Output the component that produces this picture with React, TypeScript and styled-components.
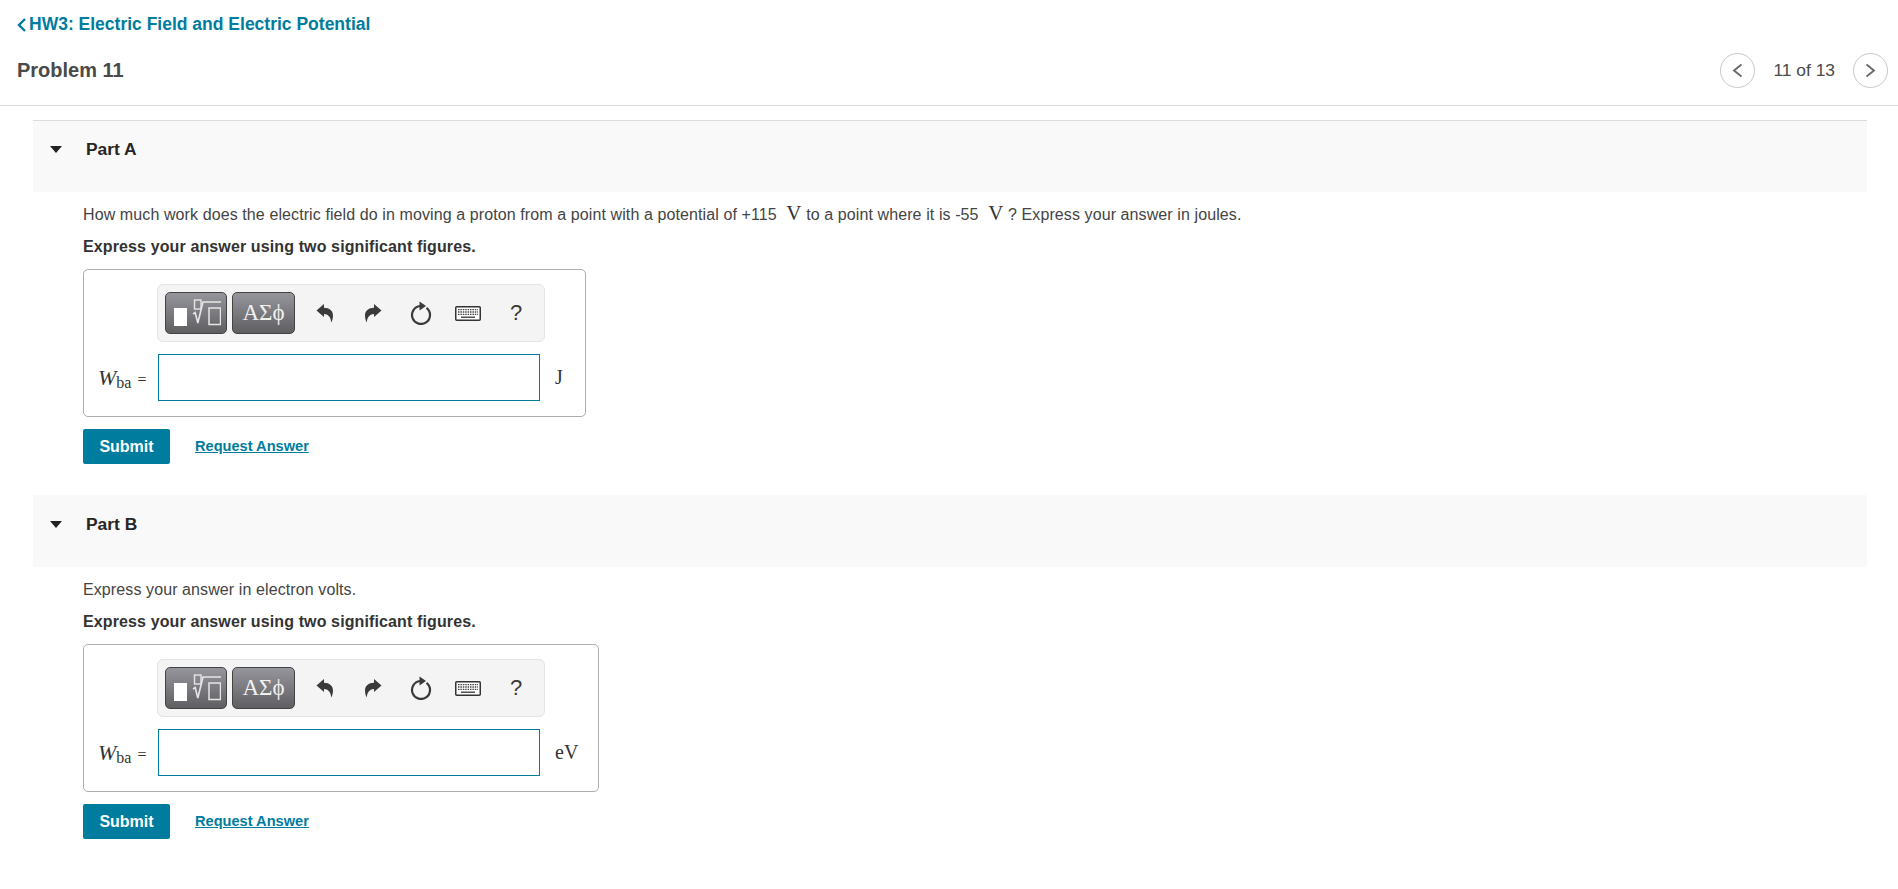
import styled, { createGlobalStyle } from "styled-components"

const GlobalStyle = createGlobalStyle`
html, body {
  margin: 0;
  padding: 0;
  background: #fff;
  font-family: "Liberation Sans", Arial, sans-serif;
  color: #333;
}
`

const teal = "#007c9e"

const UndoIcon = () => (
    <svg width="18" height="20" viewBox="0 0 18 20">
        <path d="M0.5 7.5 L8 1 L8 4.8 C13.5 4.8 17 8 17 12.5 C17 15 16.4 17.5 15.2 19.5 C15 15.5 13 11 8 11 L8 14 Z" fill="#3a3a3a" />
    </svg>
)

const RedoIcon = () => (
    <svg width="18" height="20" viewBox="0 0 18 20">
        <path d="M17.5 7.5 L10 1 L10 4.8 C4.5 4.8 1 8 1 12.5 C1 15 1.6 17.5 2.8 19.5 C3 15.5 5 11 10 11 L10 14 Z" fill="#3a3a3a" />
    </svg>
)

const ResetIcon = () => (
    <svg width="22" height="24" viewBox="0 0 22 24">
        <path d="M10 5 A9 9 0 1 0 16.5 6.8" fill="none" stroke="#3a3a3a" strokeWidth="2.2" />
        <path d="M9.5 0.5 L16 5 L9.5 9.5 Z" fill="#3a3a3a" />
    </svg>
)

const KeyboardIcon = () => (
    <svg width="26" height="15" viewBox="0 0 26 15">
        <rect x="0.75" y="0.75" width="24.5" height="13.5" rx="1" fill="#fff" stroke="#333" strokeWidth="1.5" />
        <path d="M3 3.6 H23 M3 6 H23 M3 8.4 H23" stroke="#444" strokeWidth="1.3" strokeDasharray="1.5 0.9" fill="none" />
        <path d="M6 11.2 H20" stroke="#333" strokeWidth="1.3" fill="none" />
    </svg>
)

const TemplatesIcon = () => (
    <svg width="50" height="34" viewBox="0 0 50 34">
        <rect x="3" y="12" width="13" height="18" fill="#fff" />
        <rect x="23.5" y="4" width="6.5" height="9" fill="none" stroke="#e6e6e6" strokeWidth="1.4" />
        <path d="M22 18 L24.2 16.5 L26.8 27 L32 6 H50" fill="none" stroke="#e6e6e6" strokeWidth="1.6" />
        <rect x="38" y="12" width="11.5" height="16.5" fill="none" stroke="#e6e6e6" strokeWidth="1.5" />
    </svg>
)

const Chevron = ({ flip }: { flip?: boolean }) => (
    <svg width="11" height="15" viewBox="0 0 11 15">
        <path d={flip ? "M1.5 1.5 L9 7.5 L1.5 13.5" : "M9.5 1.5 L2 7.5 L9.5 13.5"} fill="none" stroke="#666" strokeWidth="1.8" />
    </svg>
)

const BackArrow = () => (
    <svg width="10" height="14" viewBox="0 0 10 14">
        <path d="M8 1 L2 7 L8 13" fill="none" stroke={teal} strokeWidth="2.4" />
    </svg>
)

const AnswerPart = ({ title, text, unit, wide, ruled }: { title: string; text: React.ReactNode; unit: string; wide?: boolean; ruled?: boolean }) => (
    <Part>
        <PartHeader $ruled={ruled}>
            <Caret />
            <PartTitle>{title}</PartTitle>
        </PartHeader>
        <PartBody>
            <Question>{text}</Question>
            <Instruction>Express your answer using two significant figures.</Instruction>
            <AnswerBox $wide={wide}>
                <Toolbar>
                    <DarkButton $width={62}><TemplatesIcon /></DarkButton>
                    <DarkButton $width={63}>ΑΣϕ</DarkButton>
                    <ToolIcon $left={16}><UndoIcon /></ToolIcon>
                    <ToolIcon $left={25}><RedoIcon /></ToolIcon>
                    <ToolIcon $left={23}><ResetIcon /></ToolIcon>
                    <ToolIcon $left={18}><KeyboardIcon /></ToolIcon>
                    <HelpMark>?</HelpMark>
                </Toolbar>
                <InputRow>
                    <VarLabel><i>W</i><sub>ba</sub><Equals>=</Equals></VarLabel>
                    <AnswerInput />
                    <Unit>{unit}</Unit>
                </InputRow>
            </AnswerBox>
            <Actions>
                <SubmitButton>Submit</SubmitButton>
                <RequestLink>Request Answer</RequestLink>
            </Actions>
        </PartBody>
    </Part>
)

const App = () => {
    return (
        <Page>
            <GlobalStyle />
            <Header>
                <BackLink><BackArrow />HW3: Electric Field and Electric Potential</BackLink>
                <TitleRow>
                    <Title>Problem 11</Title>
                    <Pager>
                        <RoundButton><Chevron /></RoundButton>
                        <PagerText>11 of 13</PagerText>
                        <RoundButton><Chevron flip /></RoundButton>
                    </Pager>
                </TitleRow>
            </Header>
            <Main>
                <AnswerPart
                    title="Part A"
                    unit="J"
                    ruled
                    text={<>How much work does the electric field do in moving a proton from a point with a potential of +115 <MathUnit>V</MathUnit> to a point where it is -55 <MathUnit>V</MathUnit> ? Express your answer in joules.</>}
                />
                <AnswerPart title="Part B" unit="eV" wide text="Express your answer in electron volts." />
            </Main>
        </Page>
    )
}

export default App

const Page = styled.div`
width: 100%;
min-height: 889px;
`
const Header = styled.div`
height: 106px;
padding: 15px 17px 0;
box-sizing: border-box;
border-bottom: 1px solid #dcdcdc;
`
const BackLink = styled.a`
display: flex;
align-items: center;
gap: 2px;
height: 19px;
font-size: 17.5px;
font-weight: bold;
color: ${teal};
`
const TitleRow = styled.div`
display: flex;
justify-content: space-between;
align-items: center;
margin-top: 19px;
`
const Title = styled.div`
font-size: 20px;
font-weight: bold;
color: #4a4a4a;
`
const Pager = styled.div`
display: flex;
align-items: center;
gap: 18px;
margin-right: -7px;
`
const RoundButton = styled.div`
width: 35px;
height: 35px;
box-sizing: border-box;
border: 1px solid #c8c8c8;
border-radius: 50%;
display: flex;
align-items: center;
justify-content: center;
`
const PagerText = styled.div`
font-size: 17.4px;
color: #4a4a4a;
`
const Main = styled.div`
padding: 14px 31px 0 33px;
`
const Part = styled.section`
margin-bottom: 31px;
`
const PartHeader = styled.div<{ $ruled?: boolean }>`
height: 72px;
box-sizing: border-box;
border-top: 1px solid ${(p) => (p.$ruled ? "#dcdcdc" : "#f9f9f9")};
background: #f9f9f9;
display: flex;
align-items: flex-start;
padding-top: 18px;
`
const Caret = styled.div`
width: 0;
height: 0;
margin: 7px 0 0 17px;
border-left: 6.5px solid transparent;
border-right: 6.5px solid transparent;
border-top: 7px solid #222;
`
const PartTitle = styled.div`
margin-left: 24px;
font-size: 17.4px;
font-weight: bold;
color: #262626;
`
const PartBody = styled.div`
padding: 13px 0 0 50px;
`
const Question = styled.div`
font-size: 16px;
letter-spacing: 0.1px;
line-height: 20px;
color: #444;
`
const MathUnit = styled.span`
font-family: "Liberation Serif", serif;
font-size: 21px;
line-height: 0;
margin-left: 5px;
color: #333;
`
const Instruction = styled.div`
margin-top: 12px;
font-size: 16px;
letter-spacing: 0.12px;
line-height: 20px;
font-weight: bold;
color: #333;
`
const AnswerBox = styled.div<{ $wide?: boolean }>`
width: ${(p) => (p.$wide ? "516px" : "503px")};
height: 148px;
box-sizing: border-box;
margin-top: 12px;
border: 1px solid #adadad;
border-radius: 5px;
padding: 14px 0 0 73px;
`
const Toolbar = styled.div`
width: 388px;
height: 58px;
box-sizing: border-box;
display: flex;
align-items: center;
gap: 5px;
padding-left: 7px;
background: #f4f4f4;
border: 1px solid #e3e3e3;
border-radius: 6px;
`
const DarkButton = styled.div<{ $width: number }>`
width: ${(p) => p.$width}px;
height: 42px;
box-sizing: border-box;
flex: none;
display: flex;
align-items: center;
justify-content: center;
border: 1px solid #444;
border-radius: 5px;
background: linear-gradient(#95959c, #5f5f62);
color: #f0f0f0;
font-family: "Liberation Serif", serif;
font-size: 23px;
`
const ToolIcon = styled.div<{ $left: number }>`
flex: none;
display: flex;
margin-left: ${(p) => p.$left}px;
`
const HelpMark = styled.div`
margin-left: 24px;
font-family: "Liberation Sans", sans-serif;
font-size: 22px;
color: #3a3a3a;
`
const InputRow = styled.div`
display: flex;
align-items: center;
margin: 12px 0 0 -59px;
`
const VarLabel = styled.div`
width: 60px;
flex: none;
font-family: "Liberation Serif", serif;
font-size: 18px;
color: #333;
i { font-size: 22px; }
sub { font-size: 16px; vertical-align: -3px; line-height: 0; }
`
const Equals = styled.span`
margin-left: 6px;
font-size: 16px;
`
const AnswerInput = styled.input`
width: 382px;
height: 47px;
box-sizing: border-box;
flex: none;
border: 1px solid ${teal};
background: #fff;
outline: none;
`
const Unit = styled.div`
margin-left: 15px;
font-family: "Liberation Serif", serif;
font-size: 20px;
color: #333;
`
const Actions = styled.div`
display: flex;
align-items: center;
gap: 25px;
margin-top: 12px;
`
const SubmitButton = styled.div`
width: 87px;
height: 35px;
display: flex;
align-items: center;
justify-content: center;
background: ${teal};
border-radius: 2px;
color: #fff;
font-size: 16px;
font-weight: bold;
`
const RequestLink = styled.a`
margin-bottom: 2px;
font-size: 14.6px;
font-weight: bold;
color: ${teal};
text-decoration: underline;
`
